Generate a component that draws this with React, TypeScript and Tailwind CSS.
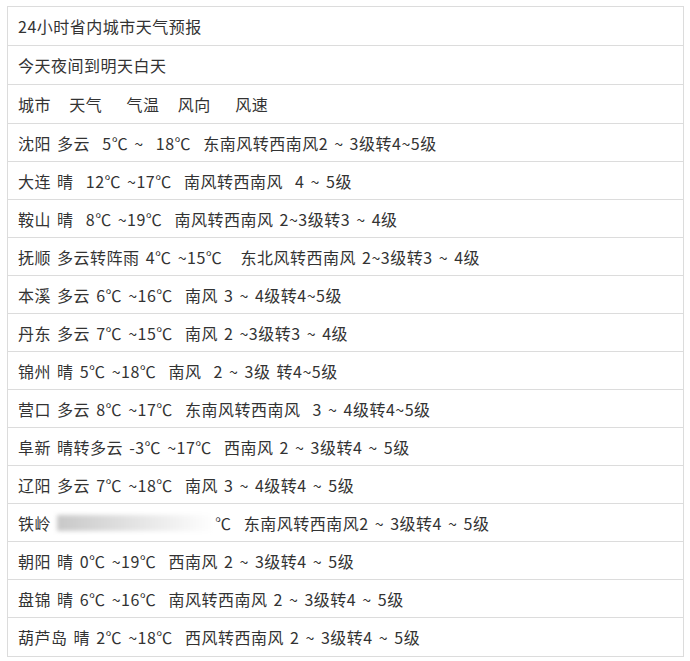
import React from 'react';

const rows: string[] = [
  '24小时省内城市天气预报',
  '今天夜间到明天白天',
  '城市   天气    气温   风向    风速',
  '沈阳 多云  5℃ ~  18℃  东南风转西南风2 ~ 3级转4~5级',
  '大连 晴  12℃ ~17℃  南风转西南风  4 ~ 5级',
  '鞍山 晴  8℃ ~19℃  南风转西南风 2~3级转3 ~ 4级',
  '抚顺 多云转阵雨 4℃ ~15℃   东北风转西南风 2~3级转3 ~ 4级',
  '本溪 多云 6℃ ~16℃  南风 3 ~ 4级转4~5级',
  '丹东 多云 7℃ ~15℃  南风 2 ~3级转3 ~ 4级',
  '锦州 晴 5℃ ~18℃  南风  2 ~ 3级 转4~5级',
  '营口 多云 8℃ ~17℃  东南风转西南风  3 ~ 4级转4~5级',
  '阜新 晴转多云 -3℃ ~17℃  西南风 2 ~ 3级转4 ~ 5级',
  '辽阳 多云 7℃ ~18℃  南风 3 ~ 4级转4 ~ 5级',
  'BLUR',
  '朝阳 晴 0℃ ~19℃  西南风 2 ~ 3级转4 ~ 5级',
  '盘锦 晴 6℃ ~16℃  南风转西南风 2 ~ 3级转4 ~ 5级',
  '葫芦岛 晴 2℃ ~18℃  西风转西南风 2 ~ 3级转4 ~ 5级',
];

export default function App() {
  return (
    <div className="w-[690px] h-[661px] bg-white pt-[6px] pl-[7px]">
      <div
        className="w-[677px] border border-[#dcdcdc] text-[16px] text-[#333] tracking-[0.5px] [word-spacing:2px]"
        style={{ fontFamily: '"Noto Sans CJK SC", "Noto Sans", sans-serif' }}
      >
        {rows.map((r, i) => (
          <div
            key={i}
            className={`flex items-center whitespace-pre pl-[10px] border-[#dcdcdc] ${i < 3 ? 'h-[39px]' : 'h-[38px]'} ${i < rows.length - 1 ? 'border-b' : ''}`}
          >
            {r === 'BLUR' ? (
              <>
                <span>铁岭 </span>
                <span className="inline-block w-[158px] h-[16px] bg-gradient-to-r from-[#c8c8c8] via-[#e4e4e4] to-white blur-[2px]" />
                <span>℃  东南风转西南风2 ~ 3级转4 ~ 5级</span>
              </>
            ) : (
              r
            )}
          </div>
        ))}
      </div>
    </div>
  );
}
